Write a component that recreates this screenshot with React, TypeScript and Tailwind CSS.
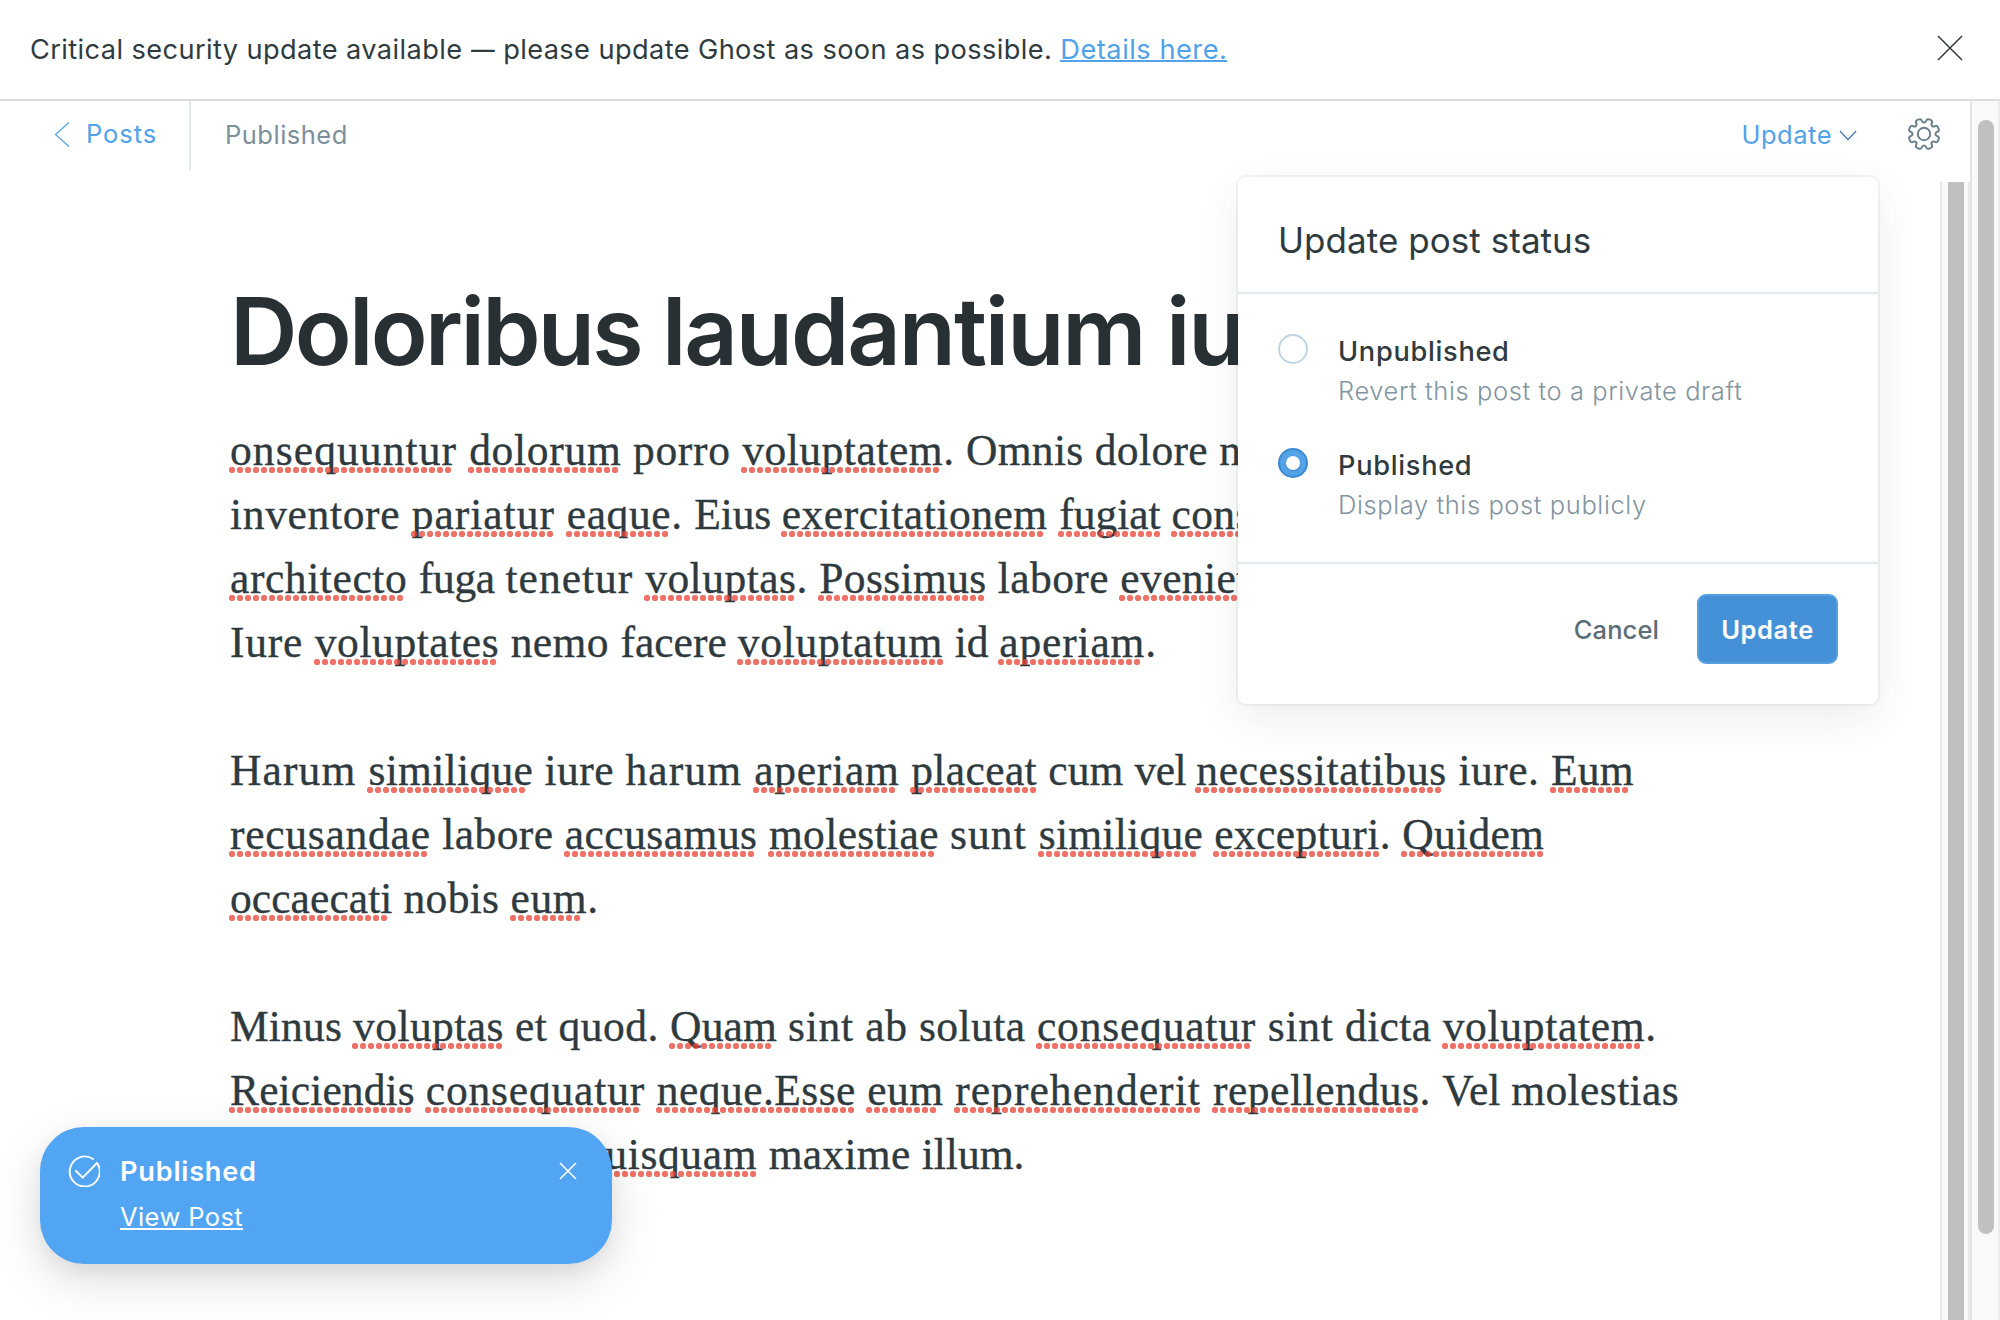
import type { ReactNode } from 'react';

type Word = {
  text: string;
  tracking: string;
  flagged?: boolean;
  tail?: string;
};

const w = (text: string, tracking: string): Word => ({ text, tracking });
const bad = (text: string, tracking: string, tail = ''): Word => ({ text, tracking, flagged: true, tail });

const paragraphs: Word[][][] = [
  [
    [
      bad('onsequuntur', 'tracking-[1.1px]'),
      bad('dolorum', 'tracking-[0.7px]'),
      w('porro', 'tracking-[0.66px]'),
      bad('voluptatem', 'tracking-[0.53px]', '.'),
      w('Omnis', 'tracking-[0.32px]'),
      w('dolore', 'tracking-[0.34px]'),
      w('nemo', 'tracking-[0.44px]'),
    ],
    [
      w('inventore', 'tracking-[0.66px]'),
      bad('pariatur', 'tracking-[0.98px]'),
      bad('eaque', 'tracking-[0.63px]', '.'),
      w('Eius', 'tracking-[-0.17px]'),
      bad('exercitationem', 'tracking-[0.54px]'),
      bad('fugiat', 'tracking-[0px]'),
      bad('cons', 'tracking-[0.4px]'),
    ],
    [
      bad('architecto', 'tracking-[0.58px]'),
      w('fuga', 'tracking-[-0.29px]'),
      w('tenetur', 'tracking-[1px]'),
      bad('voluptas', 'tracking-[0.49px]', '.'),
      bad('Possimus', 'tracking-[0.37px]'),
      w('labore', 'tracking-[0.41px]'),
      bad('eveniet', 'tracking-[0.4px]'),
    ],
    [
      w('Iure', 'tracking-[0.78px]'),
      bad('voluptates', 'tracking-[0.56px]'),
      w('nemo', 'tracking-[0.44px]'),
      w('facere', 'tracking-[0.04px]'),
      bad('voluptatum', 'tracking-[0.71px]'),
      w('id', 'tracking-[0px]'),
      bad('aperiam', 'tracking-[0.82px]', '.'),
    ],
  ],
  [
    [
      w('Harum', 'tracking-[1.12px]'),
      bad('similique', 'tracking-[0.32px]'),
      w('iure', 'tracking-[0.5px]'),
      w('harum', 'tracking-[1.14px]'),
      bad('aperiam', 'tracking-[0.74px]'),
      bad('placeat', 'tracking-[0.39px]'),
      w('cum', 'tracking-[0.08px]'),
      w('vel', 'tracking-[-0.54px]'),
      bad('necessitatibus', 'tracking-[0.64px]'),
      w('iure.', 'tracking-[0.52px]'),
      bad('Eum', 'tracking-[0.3px]'),
    ],
    [
      bad('recusandae', 'tracking-[0.75px]'),
      w('labore', 'tracking-[0.41px]'),
      bad('accusamus', 'tracking-[0.48px]'),
      bad('molestiae', 'tracking-[0.36px]'),
      w('sunt', 'tracking-[1.05px]'),
      bad('similique', 'tracking-[0.26px]'),
      bad('excepturi', 'tracking-[0.41px]', '.'),
      bad('Quidem', 'tracking-[0.3px]'),
    ],
    [
      bad('occaecati', 'tracking-[0.08px]'),
      w('nobis', 'tracking-[0.33px]'),
      bad('eum', 'tracking-[0.6px]', '.'),
    ],
  ],
  [
    [
      w('Minus', 'tracking-[0.17px]'),
      bad('voluptas', 'tracking-[0.41px]'),
      w('et', 'tracking-[0.37px]'),
      w('quod.', 'tracking-[0.48px]'),
      bad('Quam', 'tracking-[0.16px]'),
      w('sint', 'tracking-[0.69px]'),
      w('ab', 'tracking-[0.55px]'),
      w('soluta', 'tracking-[0.46px]'),
      bad('consequatur', 'tracking-[0.82px]'),
      w('sint', 'tracking-[0.69px]'),
      w('dicta', 'tracking-[0.36px]'),
      bad('voluptatem', 'tracking-[0.7px]', '.'),
    ],
    [
      bad('Reiciendis', 'tracking-[0.12px]'),
      bad('consequatur', 'tracking-[0.82px]'),
      bad('neque.Esse', 'tracking-[0.46px]'),
      bad('eum', 'tracking-[0.56px]'),
      bad('reprehenderit', 'tracking-[1.07px]'),
      bad('repellendus', 'tracking-[0.55px]', '.'),
      w('Vel', 'tracking-[0px]'),
      w('molestias', 'tracking-[0.4px]'),
    ],
  ],
];

const lastLine: Word[] = [
  bad('quisquam', 'tracking-[0.62px]'),
  w('maxime', 'tracking-[0.29px]'),
  w('illum.', 'tracking-[0px]'),
];

function Flagged({ children }: { children: ReactNode }) {
  return (
    <span className="relative after:absolute after:left-[-1px] after:top-[41px] after:h-[6px] after:w-[round(down,calc(100%+3px),8px)] after:bg-[radial-gradient(circle_at_3px_3px,rgba(234,67,53,0.75)_2.8px,transparent_3.6px)] after:bg-[length:8px_6px] after:bg-repeat-x after:content-['']">
      {children}
    </span>
  );
}

function Line({ words }: { words: Word[] }) {
  return (
    <>
      {words.map((word, i) => (
        <span key={i} className={word.tracking}>
          {word.flagged ? <Flagged>{word.text}</Flagged> : word.text}
          {word.tail}{' '}
        </span>
      ))}
    </>
  );
}

function gearPath(): string {
  const pts: [number, number][] = [];
  for (let k = 0; k < 8; k++) {
    const a = 22.5 + k * 45;
    const corners = [[-14.5, 11.5], [-11.5, 15.9], [11.5, 15.9], [14.5, 11.5]];
    for (const [d, r] of corners) {
      const t = ((a + d) * Math.PI) / 180;
      pts.push([16 + r * Math.cos(t), 16 + r * Math.sin(t)]);
    }
  }
  const mid = (p: [number, number], q: [number, number]) =>
    `${((p[0] + q[0]) / 2).toFixed(2)} ${((p[1] + q[1]) / 2).toFixed(2)}`;
  let d = `M${mid(pts[pts.length - 1], pts[0])}`;
  pts.forEach((p, i) => {
    d += `Q${p[0].toFixed(2)} ${p[1].toFixed(2)} ${mid(p, pts[(i + 1) % pts.length])}`;
  });
  return d + 'Z';
}

function Banner() {
  return (
    <div className="flex h-[101px] shrink-0 items-center justify-between border-b-2 border-[#dadddd] pl-[30px] pr-[37px]">
      <p className="mt-[2px] whitespace-pre text-[27.2px] tracking-[0.4px] text-[#303b3f]">
        Critical security update available <span className="-mr-[3px] inline-block origin-left scale-x-[0.87]">—</span> please update Ghost as soon as possible.{' '}
        <a className="inline-block h-[28px] border-b-2 border-[#51a2e9] leading-[32px] tracking-[0.52px] text-[#51a2e9]">Details here.</a>
      </p>
      <svg className="mb-[3px] size-[26px]" viewBox="0 0 26 26" fill="none" stroke="#303b3f" strokeWidth="1.5">
        <path d="M1 1L25 25M25 1L1 25" />
      </svg>
    </div>
  );
}

function Header() {
  return (
    <header className="flex h-[81px] shrink-0 items-start text-[25.5px]">
      <a className="flex h-[66px] w-[189px] items-center pl-[54px] tracking-[0.95px] text-[#51a2e9]">
        <svg className="mr-[16px] h-[25px] w-[16px]" viewBox="0 0 16 25" fill="none" stroke="currentColor" strokeWidth="1.2">
          <path d="M15 0.5L1.5 12.5L15 24.5" />
        </svg>
        Posts
      </a>
      <div className="h-[69px] w-[2px] bg-[#e2e9f1]" />
      <span className="flex h-[69px] items-center pl-[34px] tracking-[0.5px] text-[#7c909c]">Published</span>
      <div className="ml-auto flex h-[67px] items-center pr-[30px]">
        <span className="mt-[2px] tracking-[0.5px] text-[#51a2e9]">Update</span>
        <svg className="ml-[7px] mt-[3px] h-[12px] w-[18px]" viewBox="0 0 18 12" fill="none" stroke="#4a7fb3" strokeWidth="1.4">
          <path d="M1 1L9 9.8L17 1" />
        </svg>
        <svg className="mb-[1px] ml-[51px] size-[32px]" viewBox="0 0 32 32" fill="none" stroke="#6b808b" strokeWidth="2">
          <path d={gearPath()} />
          <circle cx="16" cy="16" r="6.2" />
        </svg>
      </div>
    </header>
  );
}

function Option({ title, hint, checked }: { title: string; hint: string; checked?: boolean }) {
  return (
    <div className="flex">
      {checked ? (
        <span className="mt-px flex size-[30px] items-center justify-center rounded-full border-2 border-[#3c8ad3] bg-[#54a3e7]">
          <span className="size-[14px] rounded-full bg-white shadow-[0_1px_2px_rgba(30,90,150,0.4)]" />
        </span>
      ) : (
        <span className="mt-px size-[30px] rounded-full border-2 border-[#bfd4e5]" />
      )}
      <div className="ml-[30px]">
        <div className="text-[27.2px] font-medium leading-[38px] tracking-[0.7px] text-[#303b3f]">{title}</div>
        <div className="text-[25.5px] font-light leading-[40px] tracking-[0.6px] text-[#82949f]">{hint}</div>
      </div>
    </div>
  );
}

function StatusMenu() {
  return (
    <div className="absolute left-[1238px] top-[177px] z-10 h-[527px] w-[640px] rounded-[8px] bg-white shadow-[0_0_0_2px_rgba(39,56,63,0.05),0_14px_40px_rgba(39,56,63,0.09)]">
      <div className="h-[117px] border-b-2 border-[#e2ebf2] pl-[40px] pt-[43px] text-[35px] leading-[40px] tracking-[0.05px] text-[#303b3f]">
        Update post status
      </div>
      <div className="flex h-[270px] flex-col gap-[36px] border-b-2 border-[#e2ebf2] pl-[40px] pt-[39px]">
        <Option title="Unpublished" hint="Revert this post to a private draft" />
        <Option title="Published" hint="Display this post publicly" checked />
      </div>
      <div className="flex items-center justify-end gap-[38px] pr-[40px] pt-[30px] text-[25.5px]">
        <span className="mt-[2px] font-medium tracking-[0.1px] text-[#5b6d75]">Cancel</span>
        <button className="h-[70px] w-[141px] rounded-[9px] border-2 border-[#56a0e1] bg-[#4591d7] pt-[2px] font-semibold tracking-[0.6px] text-white">
          Update
        </button>
      </div>
    </div>
  );
}

function Toast() {
  return (
    <div className="absolute left-[40px] top-[1127px] z-10 flex h-[137px] w-[572px] rounded-[44px] bg-[#51a5f2] pl-[28px] pt-[27px] text-white shadow-[0_16px_50px_rgba(0,0,0,0.13),0_8px_20px_rgba(0,0,0,0.06)]">
      <svg className="mt-px size-[32px]" viewBox="0 0 32 32" fill="none" stroke="currentColor" strokeWidth="1.9" strokeLinecap="round" strokeLinejoin="round">
        <path d="M25 4A15 15 0 1 0 29.6 8.8L29 8L14.7 22.7L8 16" />
      </svg>
      <div className="ml-[20px]">
        <div className="text-[27.2px] font-semibold leading-[36px] tracking-[0.75px]">Published</div>
        <a className="mt-[8px] inline-block h-[32px] border-b-2 border-white text-[25.5px] leading-[37px] tracking-[0.4px]">View Post</a>
      </div>
      <svg className="ml-auto mr-[35px] mt-[8px] size-[18px]" viewBox="0 0 18 18" fill="none" stroke="currentColor" strokeWidth="1.6">
        <path d="M1 1L17 17M17 1L1 17" />
      </svg>
    </div>
  );
}

export default function App() {
  return (
    <div className="relative flex h-[1320px] w-[2000px] flex-col overflow-hidden bg-white font-['Inter',sans-serif]">
      <Banner />
      <div className="flex min-h-0 flex-1">
        <div className="flex w-[1970px] flex-col">
          <Header />
          <div className="flex min-h-0 flex-1">
            <main className="w-[1940px] overflow-hidden whitespace-pre pl-[230px] pt-[94px]">
              <h1 className="text-[93.5px] font-semibold leading-[110px] tracking-[-2.1px] text-[#283033]">
                <span className="tracking-[-2.7px]">Doloribus </span>laudantium iure
              </h1>
              <div className="mt-[32px] flex flex-col gap-[64px] font-['Liberation_Serif',serif] text-[43.5px] leading-[64px] text-[#2f3a3e] [-webkit-text-stroke:0.35px_#2f3a3e]">
                {paragraphs.map((lines, p) => (
                  <div key={p}>
                    {lines.map((words, l) => (
                      <p key={l} className="h-[64px]">
                        <Line words={words} />
                      </p>
                    ))}
                    {p === paragraphs.length - 1 && (
                      <p className="h-[64px] pl-[353px]">
                        <Line words={lastLine} />
                      </p>
                    )}
                  </div>
                ))}
              </div>
            </main>
            <div className="flex w-[30px] justify-start border-x-2 border-[#e7e7e7] bg-[#f9f9f9] pl-[6px]">
              <div className="w-[16px] bg-[#c0c0c0]" />
            </div>
          </div>
        </div>
        <div className="w-[30px] border-l-2 border-r-2 border-l-[#e3e3e3] border-r-[#ebebeb] bg-[#f9f9f9] pl-[6px] pt-[19px]">
          <div className="h-[1114px] w-[16px] rounded-full bg-[#c0c0c0]" />
        </div>
      </div>
      <StatusMenu />
      <Toast />
    </div>
  );
}
